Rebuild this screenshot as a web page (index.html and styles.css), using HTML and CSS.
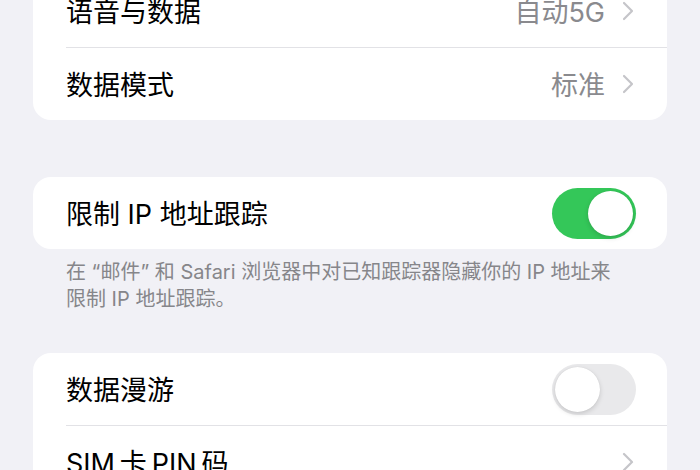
FILE: index.html
```html
<!DOCTYPE html>
<html lang="zh-CN">
<head>
<meta charset="utf-8">
<link rel="stylesheet" href="styles.css">
</head>
<body>
<div class="screen">
  <div class="card card-first">
    <div class="row">
      <span class="label">语音与数据</span>
      <span class="value">自动5G</span>
      <svg class="chev" viewBox="0 0 12 20" width="12" height="20"><path d="M2 2 L10 10 L2 18" fill="none" stroke="#c5c5c9" stroke-width="2.2" stroke-linecap="round" stroke-linejoin="round"/></svg>
    </div>
    <div class="row">
      <span class="label">数据模式</span>
      <span class="value">标准</span>
      <svg class="chev" viewBox="0 0 12 20" width="12" height="20"><path d="M2 2 L10 10 L2 18" fill="none" stroke="#c5c5c9" stroke-width="2.2" stroke-linecap="round" stroke-linejoin="round"/></svg>
    </div>
  </div>

  <div class="card card-gap">
    <div class="row">
      <span class="label">限制 IP 地址跟踪</span>
      <span class="toggle on"><span class="knob"></span></span>
    </div>
  </div>
  <p class="footnote">在 “邮件” 和 Safari 浏览器中对已知跟踪器隐藏你的 IP 地址来<br>限制 IP 地址跟踪。</p>

  <div class="card card-after-note">
    <div class="row">
      <span class="label">数据漫游</span>
      <span class="toggle off"><span class="knob"></span></span>
    </div>
    <div class="row">
      <span class="label">SIM&#8201;卡&#8201;PIN&#8201;码</span>
      <svg class="chev" viewBox="0 0 12 20" width="12" height="20"><path d="M2 2 L10 10 L2 18" fill="none" stroke="#c5c5c9" stroke-width="2.2" stroke-linecap="round" stroke-linejoin="round"/></svg>
    </div>
  </div>
</div>
</body>
</html>
```
FILE: styles.css
```css
html, body {
  margin: 0;
  padding: 0;
  background: #f1f1f6;
  overflow: hidden;
}
body {
  width: 700px;
  height: 470px;
  font-family: "Inter", "Noto Sans CJK SC", sans-serif;
  -webkit-font-smoothing: antialiased;
}
.screen {
  padding: 0 33px;
}
.card {
  background: #ffffff;
  border-radius: 18px;
  overflow: hidden;
}
.card-first {
  margin-top: -25px;
}
.card-gap {
  margin-top: 57px;
}
.card-after-note {
  margin-top: 40px;
}
.row {
  display: flex;
  align-items: center;
  height: 72px;
  margin-left: 33px;
  padding-right: 31px;
}
.row + .row {
  border-top: 1px solid #e2e2e6;
}
.label {
  flex: 1;
  font-size: 27px;
  line-height: 1.2;
  padding-top: 4px;
  color: #000;
  white-space: nowrap;
}
.value {
  font-size: 27px;
  line-height: 1.2;
  padding-top: 4px;
  color: #8a8a8e;
  margin-right: 17px;
}
.chev {
  margin-right: 2px;
  flex: none;
}
.toggle {
  flex: none;
  width: 84px;
  height: 51px;
  border-radius: 26px;
  position: relative;
  box-sizing: border-box;
}
.toggle.on {
  background: #34c759;
}
.toggle.off {
  background: #e9e9eb;
}
.knob {
  position: absolute;
  top: 3px;
  width: 45px;
  height: 45px;
  border-radius: 50%;
  background: #fff;
  box-shadow: 0 2px 5px rgba(0,0,0,0.15), 0 0 1px rgba(0,0,0,0.1);
}
.toggle.on .knob {
  right: 3px;
}
.toggle.off .knob {
  left: 3px;
}
.footnote {
  margin: 0;
  padding: 10px 33px 0 33px;
  font-size: 20px;
  line-height: 27px;
  color: #86868a;
  white-space: nowrap;
}
```
